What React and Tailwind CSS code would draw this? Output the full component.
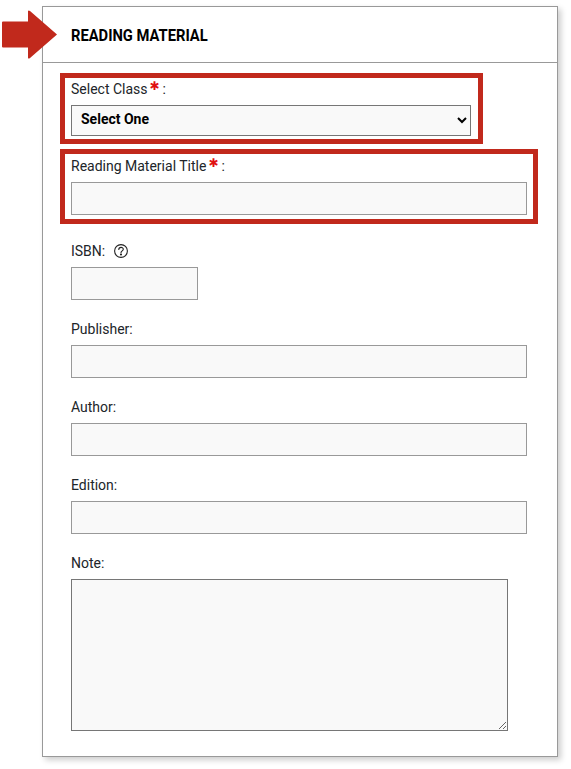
import React from "react";

const inputCls = "block h-[33px] border border-[#999] bg-[#f9f9f9] outline-none";

function Field({ label, w = "w-[456px]" }) {
  return (
    <div className="mt-[19px]">
      <label className="block h-[26px] text-[14px] leading-[20px] text-[#212529]">{label}:</label>
      <input type="text" className={`${inputCls} ${w}`} />
    </div>
  );
}

function Star() {
  return <span className="relative top-[-4px] ml-[2px] mr-[4px] inline-block w-[9px] text-center font-['DejaVu_Sans',sans-serif] text-[12px] leading-[14px] font-bold text-[#e01010]">✱</span>;
}

export default function App() {
  return (
    <div className="relative h-[769px] w-[571px] overflow-hidden bg-white font-['Roboto',sans-serif] text-[#212529]">
      <svg className="absolute left-[2px] top-[10px] z-10" width="56" height="50" viewBox="0 0 56 50">
        <path d="M1 11.500 H26 V1 Q26.500 0 28 1 L55 24.500 L28 48 Q26.500 49 26 48 V37.500 H1 Q0 37.500 0 36.500 V12.500 Q0 11.500 1 11.500 Z" fill="#c1291c" />
      </svg>
      <div className="ml-[42px] mt-[6px] h-[751px] w-[516px] border border-[#999] shadow-[3px_3px_6px_rgba(0,0,0,0.2)]">
        <div className="flex h-[56px] items-center border-b border-[#999] pl-[28px]">
          <h2 className="origin-left translate-y-[1px] scale-x-[0.92] text-[16px] font-bold whitespace-nowrap uppercase text-black">Reading Material</h2>
        </div>
        <div className="px-[28px] pt-[10px]">
          <div className="-ml-[11px] h-[71px] w-[423px] border-[5px] border-[#c1291c] pl-[6px] pt-[1px]">
            <label className="block h-[26px] text-[14px] leading-[20px]">Select Class<Star />:</label>
            <select className="block h-[31px] w-[400px] border border-[#767676] bg-[#f9f9f9] pb-[4px] pl-[5px] text-[14px] font-bold text-black [appearance:auto]">
              <option>Select One</option>
            </select>
          </div>
          <div className="-ml-[11px] mt-[5px] h-[75px] w-[478px] border-[5px] border-[#c1291c] pl-[6px] pt-[2px]">
            <label className="block h-[26px] text-[14px] leading-[20px]">Reading Material Title<Star />:</label>
            <input type="text" className={`${inputCls} w-[456px]`} />
          </div>
          <div className="mt-[17px]">
            <label className="flex h-[26px] items-start text-[14px] leading-[20px]">
              ISBN:
              <svg className="ml-[9px] mt-[3px]" width="14" height="14" viewBox="0 0 14 14" fill="none" stroke="#222" strokeWidth="1.100">
                <circle cx="7" cy="7" r="6.400" />
                <path d="M4.800 5.500 C4.800 2.700 9.300 2.700 9.300 5.300 C9.300 6.900 7 6.900 7 8.700" strokeLinecap="round" />
                <circle cx="7" cy="10.500" r="0.500" fill="#222" />
              </svg>
            </label>
            <input type="text" className={`${inputCls} w-[127px]`} />
          </div>
          <Field label="Publisher" />
          <Field label="Author" />
          <Field label="Edition" />
          <div className="mt-[19px]">
            <label className="block h-[26px] text-[14px] leading-[20px]">Note:</label>
            <textarea className="block h-[152px] w-[437px] border border-[#767676] bg-[#f9f9f9] outline-none" />
          </div>
        </div>
      </div>
    </div>
  );
}
